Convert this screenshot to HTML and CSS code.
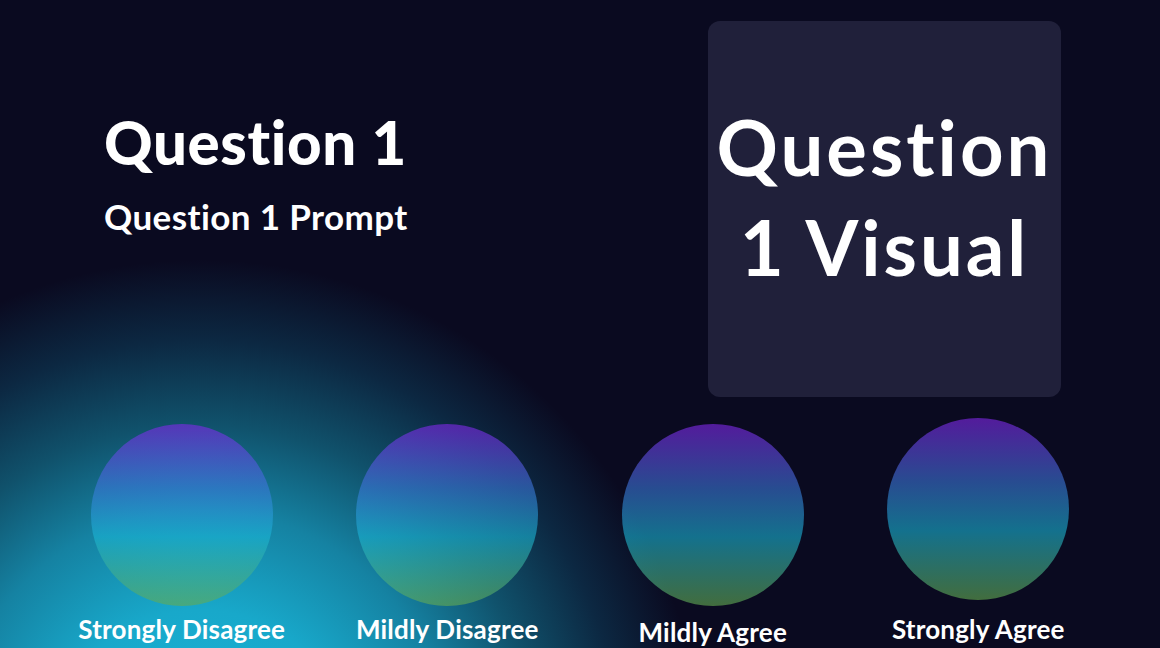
FILE: index.html
```html
<!DOCTYPE html>
<html lang="en">
<head>
<meta charset="utf-8">
<title>Question 1</title>
<link rel="stylesheet" href="styles.css">
</head>
<body>
<main class="screen">
  <div class="glow"></div>
  <section class="top">
    <div class="intro">
      <h1 class="title">Question 1</h1>
      <p class="prompt">Question 1 Prompt</p>
    </div>
    <div class="visual">
      <span class="visual-text">Question 1 Visual</span>
    </div>
  </section>
  <section class="options">
    <div class="option">
      <div class="orb"></div>
      <span class="label">Strongly Disagree</span>
    </div>
    <div class="option">
      <div class="orb"></div>
      <span class="label">Mildly Disagree</span>
    </div>
    <div class="option option-low">
      <div class="orb"></div>
      <span class="label">Mildly Agree</span>
    </div>
    <div class="option option-high">
      <div class="orb"></div>
      <span class="label">Strongly Agree</span>
    </div>
  </section>
</main>
</body>
</html>
```
FILE: styles.css
```css
* { box-sizing: border-box; }
html, body {
  margin: 0;
  padding: 0;
  height: 100%;
  background: #0a0a20;
  overflow: hidden;
}
.screen {
  position: relative;
  width: 1160px;
  height: 648px;
  overflow: hidden;
  font-family: "Lato", "Open Sans", sans-serif;
  color: #ffffff;
  display: flex;
  flex-direction: column;
}
.glow {
  position: absolute;
  left: -300px;
  top: 260px;
  width: 1000px;
  height: 1000px;
  border-radius: 50%;
  background: radial-gradient(circle closest-side, #1ab6da 0%, #18a8ca 30%, #1582a2 50%, #10526c 67%, #0c2842 84%, rgba(10,10,32,0) 100%);
  pointer-events: none;
}
.top {
  position: relative;
  display: flex;
  justify-content: space-between;
  padding: 21px 99px 0 104px;
  height: 397px;
}
.intro {
  padding-top: 86px;
}
.title {
  margin: 0;
  font-size: 60px;
  font-weight: 900;
  line-height: 70px;
  letter-spacing: 0.6px;
}
.prompt {
  margin: 19px 0 0;
  font-size: 35px;
  font-weight: 700;
  line-height: 40px;
  letter-spacing: 0.4px;
}
.visual {
  width: 353px;
  height: 376px;
  background: #20203a;
  border-radius: 12px;
  display: flex;
  justify-content: center;
  padding-top: 76px;
}
.visual-text {
  font-size: 76px;
  font-weight: 700;
  line-height: 100px;
  text-align: center;
  letter-spacing: 3px;
}
.options {
  position: relative;
  display: grid;
  grid-template-columns: repeat(4, 1fr);
  padding: 27px 49px 0;
}
.option {
  display: flex;
  flex-direction: column;
  align-items: center;
}
.orb {
  width: 182px;
  height: 182px;
  border-radius: 50%;
  background: linear-gradient(180deg, rgba(128,38,232,0.62) 0%, rgba(60,120,220,0.6) 35%, rgba(26,182,214,0.6) 62%, rgba(100,170,80,0.62) 100%);
}
.label {
  margin-top: 8px;
  font-size: 26px;
  font-weight: 700;
  line-height: 30px;
  letter-spacing: 0.2px;
  white-space: nowrap;
}
.option-low .label { margin-top: 12px; line-height: 28px; }
.option-high { margin-top: -6px; }
.option-high .label { margin-top: 14px; }
```
